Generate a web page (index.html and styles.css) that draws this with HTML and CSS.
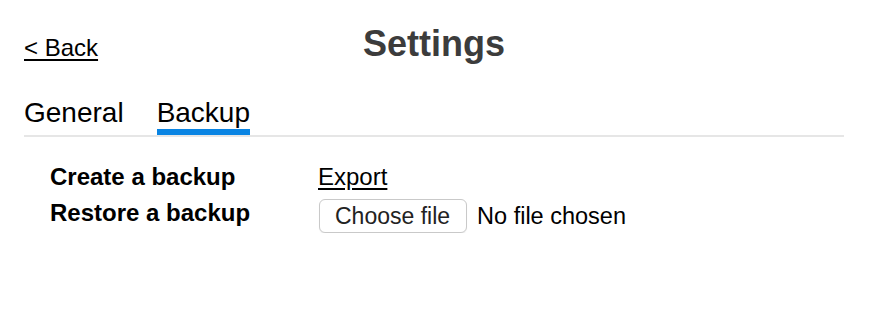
FILE: index.html
```html
<!DOCTYPE html>
<html>
<head>
<meta charset="utf-8">
<link rel="stylesheet" href="styles.css">
</head>
<body>
<div class="page">
  <header class="header">
    <a class="back" href="#">&lt; Back</a>
    <h1 class="title">Settings</h1>
    <span class="spacer"></span>
  </header>
  <nav class="tabs">
    <span class="tab">General</span>
    <span class="tab active">Backup</span>
  </nav>
  <div class="rows">
    <div class="label">Create a backup</div>
    <div class="value"><a class="link" href="#">Export</a></div>
    <div class="label">Restore a backup</div>
    <div class="value file"><span class="btn">Choose file</span><span class="nofile">No file chosen</span></div>
  </div>
</div>
</body>
</html>
```

FILE: styles.css
```css
html, body {
  margin: 0;
  padding: 0;
  background: #fff;
}
body {
  font-family: "Liberation Sans", Arial, sans-serif;
  color: #000;
}
.page {
  padding: 24px 32px 0 24px;
}
.header {
  display: grid;
  grid-template-columns: 1fr auto 1fr;
  align-items: baseline;
  height: 47px;
}
.back {
  font-size: 24px;
  color: #000;
  text-decoration: underline;
  text-underline-offset: 3px;
}
.title {
  margin: 0;
  font-size: 36px;
  font-weight: bold;
  color: #3c3c3c;
  line-height: 40px;
}
.tabs {
  display: flex;
  gap: 33px;
  border-bottom: 2px solid #e6e6e6;
  margin-top: 25px;
}
.tab {
  font-size: 28px;
  line-height: 33px;
  border-bottom: 6px solid transparent;
}
.tab.active {
  border-bottom-color: #0984e3;
}
.rows {
  display: grid;
  grid-template-columns: 268px auto;
  row-gap: 8px;
  padding-left: 26px;
  margin-top: 26px;
  align-items: start;
}
.label {
  font-size: 24px;
  font-weight: bold;
  line-height: 28px;
}
.link {
  font-size: 24px;
  line-height: 28px;
  color: #000;
  text-decoration: underline;
  text-underline-offset: 3px;
}
.file {
  display: flex;
  align-items: center;
  gap: 10px;
  margin-left: 1px;
}
.btn {
  display: inline-block;
  font-size: 23px;
  line-height: 30px;
  color: #222;
  padding: 1px 16px 1px 15px;
  border: 1px solid #c9c9c9;
  border-radius: 6px;
  background: #fff;
  box-shadow: 0 1px 1px rgba(0,0,0,0.06);
}
.nofile {
  font-size: 23.5px;
}
```
